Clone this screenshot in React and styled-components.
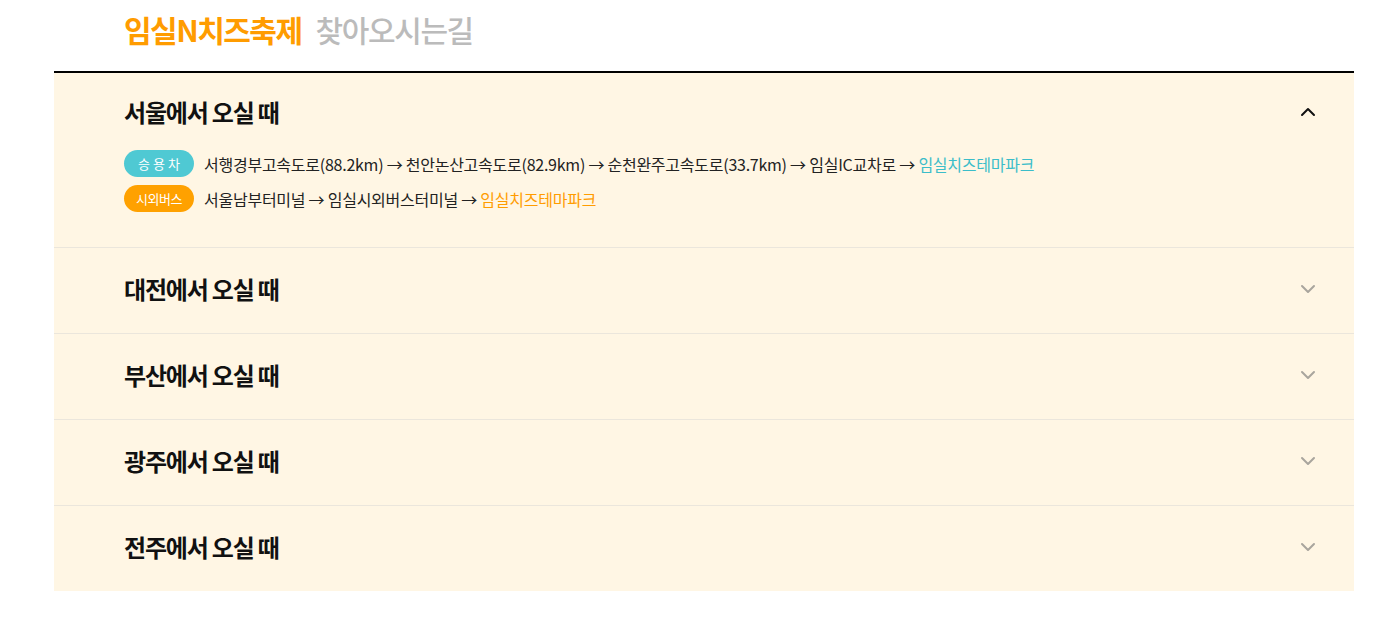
import React, { useState } from "react";
import styled, { createGlobalStyle, css } from "styled-components";

const Global = createGlobalStyle`
  html, body { margin: 0; padding: 0; background: #fff; }
  body { font-family: "Noto Sans CJK KR", "Noto Sans", sans-serif; color: #222; }
  * { box-sizing: border-box; }
`;

const Page = styled.div`
  width: 1395px;
  padding: 0 41px 0 54px;
`;

const TitleBar = styled.h1`
  margin: 0;
  height: 71px;
  padding: 9px 0 0 70px;
  display: flex;
  align-items: baseline;
  gap: 14px;
  font-size: 30px;
  line-height: 40px;
  font-weight: 700;
  letter-spacing: -1.5px;
`;

const Brand = styled.span`
  color: #ff9c00;
`;

const Sub = styled.span`
  color: #bbbbbb;
  font-weight: 500;
  letter-spacing: -1.4px;
`;

const Accordion = styled.div`
  border-top: 2px solid #000;
  background: #fff6e4;
`;

const Item = styled.section`
  & + & {
    border-top: 1px solid #ebe6dc;
  }
`;

const Header = styled.button`
  width: 100%;
  border: 0;
  background: transparent;
  display: flex;
  align-items: center;
  justify-content: space-between;
  padding: ${(p) => (p.$open ? "21px 38px 19px 70px" : "23px 38px 26px 70px")};
  font-family: inherit;
  cursor: pointer;
  text-align: left;
`;

const HeadTitle = styled.span`
  font-size: 24px;
  line-height: 36px;
  font-weight: 700;
  letter-spacing: -1.2px;
  color: #111;
`;

const Chevron = styled.svg`
  width: 16px;
  height: 10px;
  transform: ${(p) => (p.$open ? "rotate(180deg)" : "none")};
`;

const Body = styled.div`
  padding: 1px 70px 35px;
  display: flex;
  flex-direction: column;
  gap: 8px;
`;

const Route = styled.div`
  display: flex;
  align-items: center;
  gap: 10px;
  font-size: 16px;
  letter-spacing: -0.25px;
  color: #222;
`;

const Badge = styled.span`
  flex: none;
  width: 70px;
  height: 27px;
  border-radius: 14px;
  display: inline-flex;
  align-items: center;
  justify-content: center;
  color: #fff;
  font-size: 13px;
  letter-spacing: ${(p) => (p.$spaced ? "3px" : "-0.5px")};
  background: ${(p) => (p.$tone === "teal" ? "#4fc9d3" : "#ffa100")};
  ${(p) =>
    p.$spaced &&
    css`
      padding-left: 3px;
    `}
`;

const Dest = styled.span`
  color: ${(p) => (p.$tone === "teal" ? "#3bbdc9" : "#ff9c00")};
`;

const regions = ["서울", "대전", "부산", "광주", "전주"];

function ChevronIcon({ open }) {
  return (
    <Chevron $open={open} viewBox="0 0 16 10" fill="none">
      <path
        d="M2 2l6 6 6-6"
        stroke={open ? "#111" : "#a9a59d"}
        strokeWidth="2"
        strokeLinecap="round"
        strokeLinejoin="round"
      />
    </Chevron>
  );
}

export default function App() {
  const [open, setOpen] = useState(0);
  return (
    <>
      <Global />
      <Page>
        <TitleBar>
          <Brand>임실N치즈축제</Brand>
          <Sub>찾아오시는길</Sub>
        </TitleBar>
        <Accordion>
          {regions.map((r, i) => (
            <Item key={r}>
              <Header $open={open === i} onClick={() => setOpen(open === i ? -1 : i)}>
                <HeadTitle>{r}에서 오실 때</HeadTitle>
                <ChevronIcon open={open === i} />
              </Header>
              {open === i && (
                <Body>
                  <Route>
                    <Badge $tone="teal" $spaced>승용차</Badge>
                    <span>
                      서행경부고속도로(88.2km) → 천안논산고속도로(82.9km) → 순천완주고속도로(33.7km) → 임실IC교차로 →{" "}
                      <Dest $tone="teal">임실치즈테마파크</Dest>
                    </span>
                  </Route>
                  <Route>
                    <Badge $tone="orange">시외버스</Badge>
                    <span>
                      서울남부터미널 → 임실시외버스터미널 → <Dest $tone="orange">임실치즈테마파크</Dest>
                    </span>
                  </Route>
                </Body>
              )}
            </Item>
          ))}
        </Accordion>
      </Page>
    </>
  );
}
